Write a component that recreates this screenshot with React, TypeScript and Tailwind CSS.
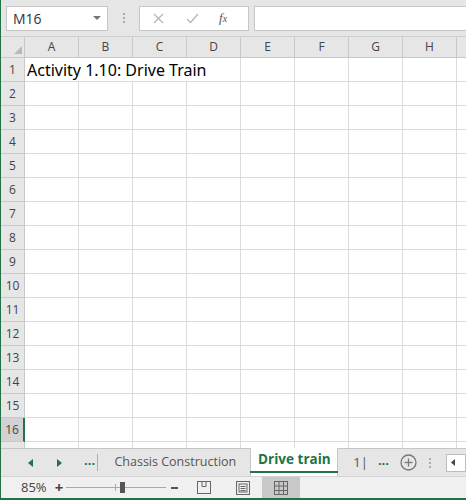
import React from 'react';

const cols = ['A', 'B', 'C', 'D', 'E', 'F', 'G', 'H', 'I'];
const rows = Array.from({ length: 17 }, (_, i) => i + 1);

const GridIcon = () => (
  <svg width="14" height="14" viewBox="0 0 14 14" fill="none" stroke="#666" strokeWidth="1">
    <rect x="0.5" y="0.5" width="13" height="13" />
    <line x1="5" y1="0.5" x2="5" y2="13.5" />
    <line x1="9.5" y1="0.5" x2="9.5" y2="13.5" />
    <line x1="0.5" y1="5" x2="13.5" y2="5" />
    <line x1="0.5" y1="9.5" x2="13.5" y2="9.5" />
  </svg>
);

const App: React.FC = () => {
  return (
    <div
      className="w-[466px] h-[500px] overflow-hidden bg-white flex flex-col border-l border-[#217346] text-[#444]"
      style={{ fontFamily: '"Open Sans", "Noto Sans", sans-serif' }}
    >
      {/* Formula bar */}
      <div className="h-[37px] shrink-0 bg-[#e6e6e6] flex items-center gap-0 pl-[5px] border-b border-[#d0d0d0]">
        <div className="w-[102px] h-[25px] bg-white border border-[#c6c6c6] flex items-center justify-between pl-[6px] pr-[6px]">
          <span className="text-[14px] text-[#333]">M16</span>
          <svg width="8" height="5" viewBox="0 0 8 5"><path d="M0 0h8L4 4z" fill="#777" /></svg>
        </div>
        <div className="w-[31px] flex flex-col items-center gap-[2px]">
          <span className="w-[2px] h-[2px] bg-[#aaa]" />
          <span className="w-[2px] h-[2px] bg-[#aaa]" />
          <span className="w-[2px] h-[2px] bg-[#aaa]" />
        </div>
        <div className="w-[110px] h-[25px] bg-white border border-[#c6c6c6] flex items-center">
          <svg className="ml-[13px]" width="11" height="11" viewBox="0 0 11 11" stroke="#b5b5b5" strokeWidth="1.2">
            <line x1="1" y1="1" x2="10" y2="10" />
            <line x1="10" y1="1" x2="1" y2="10" />
          </svg>
          <svg className="ml-[22px]" width="13" height="11" viewBox="0 0 13 11" fill="none" stroke="#b5b5b5" strokeWidth="1.3">
            <path d="M1 6l3.5 3.5L12 1" />
          </svg>
          <span
            className="ml-[20px] text-[13px] italic text-[#555]"
            style={{ fontFamily: '"Liberation Serif", serif' }}
          >
            f<span className="text-[10px]">x</span>
          </span>
        </div>
        <div className="ml-[5px] flex-1 h-[25px] bg-white border border-[#c6c6c6] border-r-0" />
      </div>

      {/* Grid */}
      <div className="flex-1 overflow-hidden">
        <div className="grid grid-cols-[24px_repeat(8,54px)_54px]">
          <div className="h-[21px] bg-[#e6e6e6] border-b border-r border-[#c8c8c8] flex items-end justify-end pr-[2px] pb-[3px]">
            <svg width="8" height="8" viewBox="0 0 8 8"><path d="M8 0v8H0z" fill="#b9b9b9" /></svg>
          </div>
          {cols.map((c) => (
            <div
              key={c}
              className="h-[21px] bg-[#e6e6e6] border-b border-r border-[#c8c8c8] flex items-center justify-center text-[12px] text-[#444]"
            >
              {c}
            </div>
          ))}
          {rows.map((r) => (
            <React.Fragment key={r}>
              <div
                className={
                  r === 16
                    ? 'h-[24px] bg-[#d2d2d2] border-b border-r-2 border-b-[#c8c8c8] border-r-[#217346] flex items-center justify-center text-[12px] text-[#444]'
                    : 'h-[24px] bg-[#e6e6e6] border-b border-r border-[#c8c8c8] flex items-center justify-center text-[12px] text-[#444]'
                }
              >
                {r}
              </div>
              {cols.map((c) => (
                <div
                  key={c}
                  className={
                    r === 1 && (c === 'A' || c === 'B' || c === 'C')
                      ? 'h-[24px] border-b border-[#dadada] relative'
                      : 'h-[24px] border-b border-r border-[#dadada] relative'
                  }
                >
                  {r === 1 && c === 'A' && (
                    <span
                      className="absolute z-10 left-[2px] top-0 whitespace-nowrap text-[16px] text-black"
                      style={{ fontFamily: '"Noto Sans", sans-serif' }}
                    >
                      Activity 1.10: Drive Train
                    </span>
                  )}
                </div>
              ))}
            </React.Fragment>
          ))}
        </div>
      </div>

      {/* Sheet tabs */}
      <div className="h-[28px] shrink-0 bg-[#e6e6e6] border-t border-[#c6c6c6] flex items-stretch text-[13px]">
        <div className="w-[100px] flex items-center">
          <svg className="ml-[27px]" width="5" height="8" viewBox="0 0 5 8"><path d="M5 0v8L0 4z" fill="#217346" /></svg>
          <svg className="ml-[24px]" width="5" height="8" viewBox="0 0 5 8"><path d="M0 0v8l5-4z" fill="#217346" /></svg>
          <span className="ml-[22px] text-[#217346] font-bold leading-none pb-[4px]">...</span>
        </div>
        <div className="w-px my-[5px] bg-[#b0b0b0]" />
        <div className="w-[157px] flex items-center pl-[16px] text-[12.5px] text-[#555]">Chassis Construction</div>
        <div className="w-[91px] -mt-px bg-white border-x border-[#c6c6c6] flex flex-col">
          <div className="flex-1 flex items-center justify-center font-bold text-[#217346] text-[13.5px]">Drive train</div>
          <div className="h-[2px] bg-[#217346] mx-[-1px] mb-[3px]" />
        </div>
        <div className="flex items-center">
          <span className="ml-[15px] text-[#555]">1|</span>
          <span className="ml-[10px] text-[#217346] font-bold leading-none pb-[4px]">...</span>
          <svg className="ml-[11px]" width="17" height="17" viewBox="0 0 17 17" fill="none" stroke="#777" strokeWidth="1.3">
            <circle cx="8.5" cy="8.5" r="7.5" />
            <line x1="8.5" y1="4.5" x2="8.5" y2="12.5" />
            <line x1="4.5" y1="8.5" x2="12.5" y2="8.5" />
          </svg>
          <div className="ml-[12px] flex flex-col gap-[2px]">
            <span className="w-[2px] h-[2px] bg-[#aaa]" />
            <span className="w-[2px] h-[2px] bg-[#aaa]" />
            <span className="w-[2px] h-[2px] bg-[#aaa]" />
          </div>
          <div className="ml-[15px] w-[20px] h-[18px] bg-white border border-[#bdbdbd] flex items-center pl-[4px]">
            <svg width="4" height="7" viewBox="0 0 4 7"><path d="M4 0v7L0 3.5z" fill="#444" /></svg>
          </div>
        </div>
      </div>

      {/* Status bar */}
      <div className="h-[22px] shrink-0 bg-[#f0f0f0] border-t border-[#d4d4d4] flex items-stretch text-[13px] text-[#444]">
        <span className="ml-[20px] flex items-center">85%</span>
        <span className="ml-[8px] flex items-center font-bold text-[15px]">+</span>
        <div className="ml-[3px] w-[100px] relative flex items-center">
          <div className="w-full h-px bg-[#a8a8a8]" />
          <div className="absolute left-[49px] top-[7px] w-px h-[7px] bg-[#a8a8a8]" />
          <div className="absolute left-[54px] top-[5px] w-[5px] h-[11px] bg-[#555]" />
        </div>
        <div className="ml-[5px] flex items-center">
          <div className="w-[7px] h-[2px] bg-[#555]" />
        </div>
        <div className="ml-[19px] flex items-center">
          <svg width="14" height="13" viewBox="0 0 14 13" fill="none" stroke="#666" strokeWidth="1">
            <rect x="0.5" y="0.5" width="13" height="12" />
            <path d="M5 0.5v5h4v-5" />
          </svg>
        </div>
        <div className="ml-[25px] flex items-center">
          <svg width="14" height="14" viewBox="0 0 14 14" fill="none" stroke="#666" strokeWidth="1">
            <rect x="0.5" y="0.5" width="13" height="13" />
            <rect x="3" y="3" width="8" height="8" />
            <line x1="4.5" y1="5.5" x2="9.5" y2="5.5" />
            <line x1="4.5" y1="7.5" x2="9.5" y2="7.5" />
            <line x1="4.5" y1="9.5" x2="9.5" y2="9.5" />
          </svg>
        </div>
        <div className="ml-[12px] w-[38px] bg-[#c8c8c8] flex items-center justify-center">
          <GridIcon />
        </div>
      </div>
      <div className="h-[2px] shrink-0 bg-[#217346]" />
    </div>
  );
};

export default App;
